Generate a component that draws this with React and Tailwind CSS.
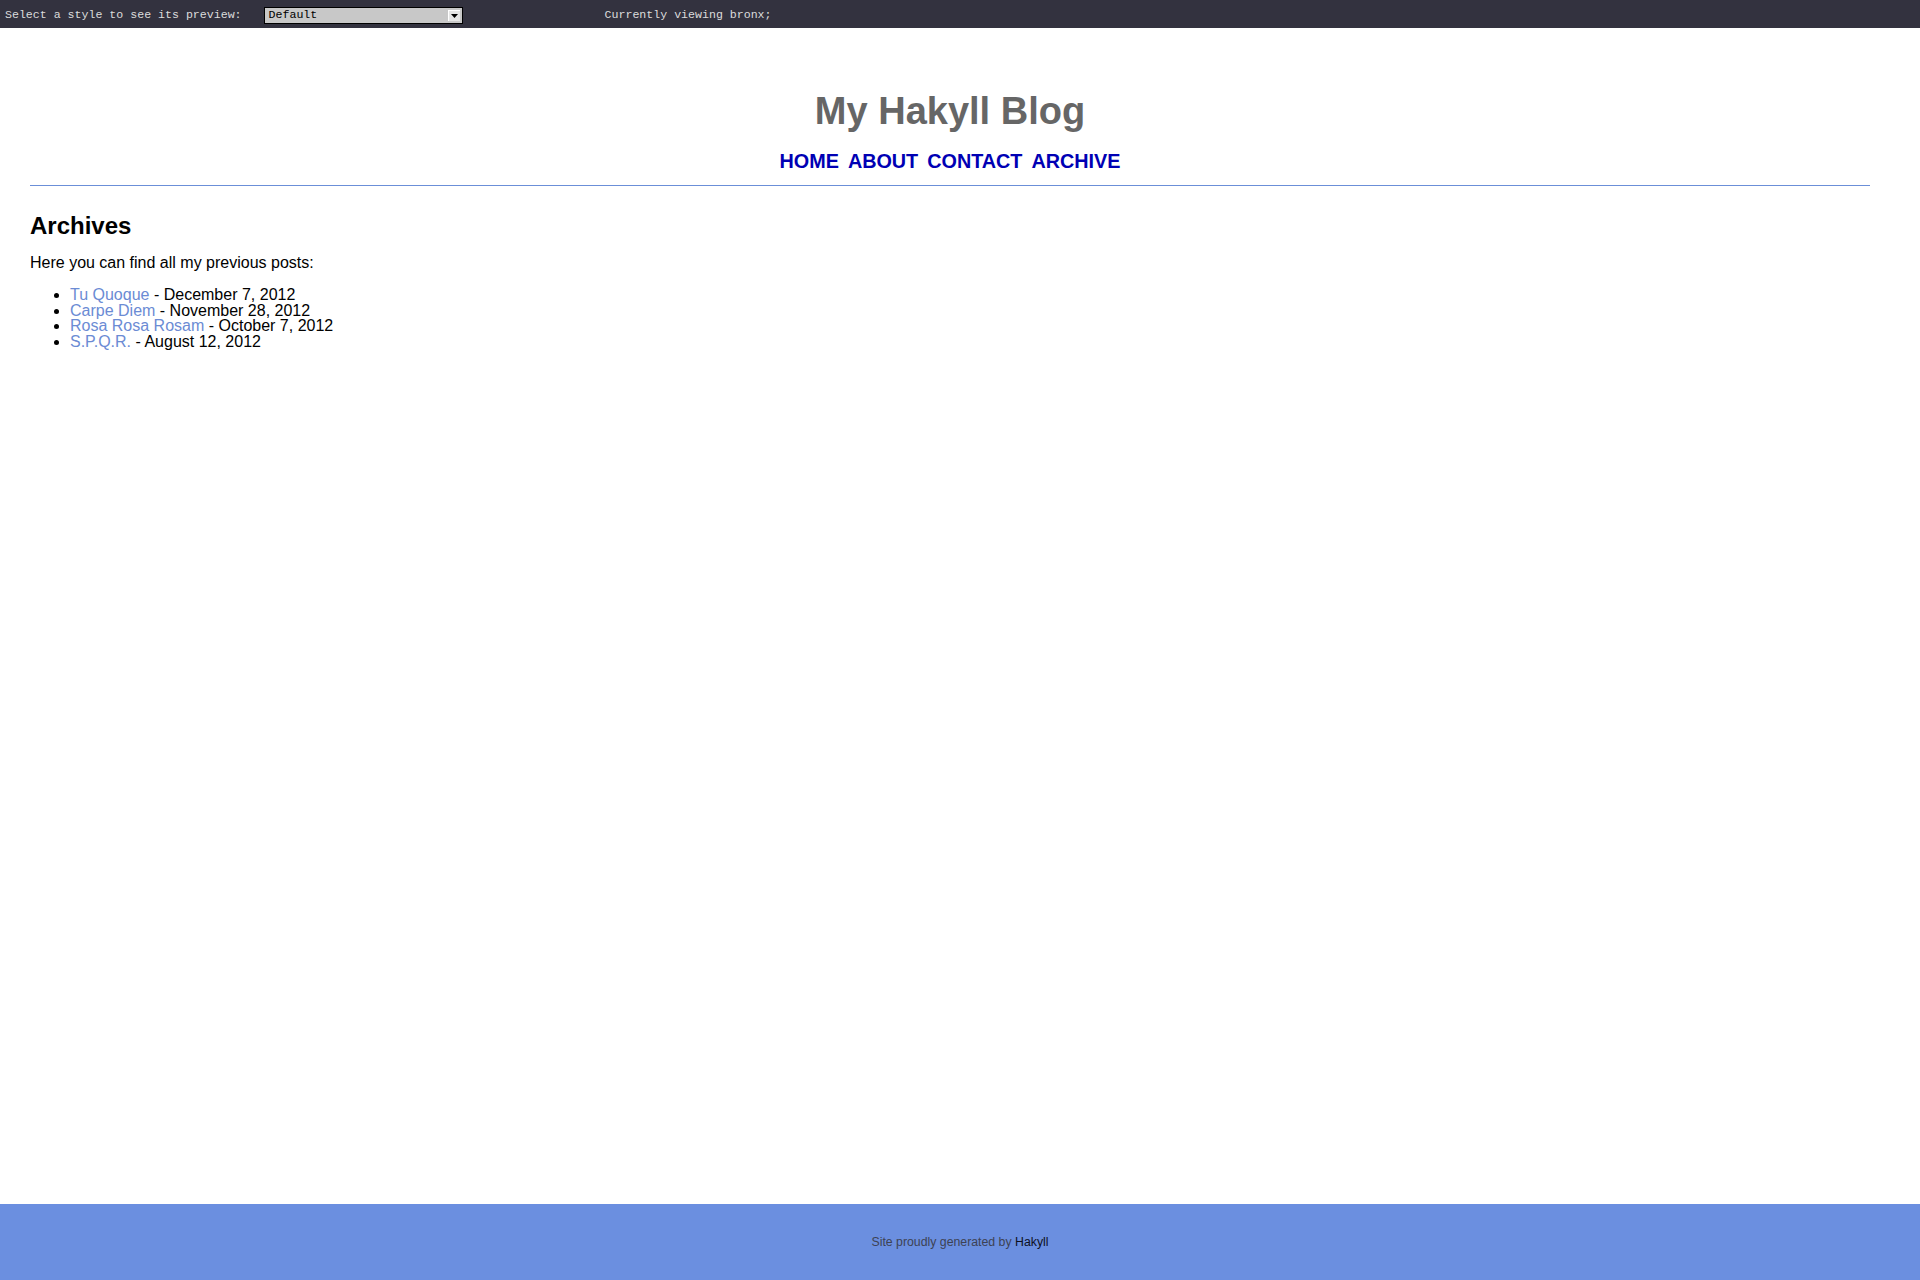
export default function App() {
  const posts = [
    { title: "Tu Quoque", date: "December 7, 2012" },
    { title: "Carpe Diem", date: "November 28, 2012" },
    { title: "Rosa Rosa Rosam", date: "October 7, 2012" },
    { title: "S.P.Q.R.", date: "August 12, 2012" },
  ];

  return (
    <div className="h-screen overflow-hidden flex flex-col bg-white font-['Liberation_Sans',Arial,sans-serif] text-black">
      {/* style switcher bar */}
      <div className="h-[28px] pt-[2px] bg-[#33323f] flex items-center text-[11.6px] text-[#dcdcdc] font-['Liberation_Mono','Courier_New',monospace] shrink-0">
        <span className="ml-[5px]">Select a style to see its preview:</span>
        <div className="ml-[22px] w-[199px] h-[17px] bg-[#c8c8c8] border border-black flex items-center justify-between pl-[4px] pr-[2px] text-black">
          <span>Default</span>
          <span className="w-[12px] h-[11px] bg-[#e6e6e6] border-l border-t border-white flex items-center justify-center">
            <svg width="7" height="4" viewBox="0 0 7 4">
              <path d="M0 0H7L3.5 4Z" fill="#000" />
            </svg>
          </span>
        </div>
        <span className="ml-[142px]">Currently viewing bronx;</span>
      </div>

      <main className="flex-1 ml-[30px] mr-[50px]">
        <header className="pt-[61px] text-center">
          <h1 className="text-[38px] leading-[44px] font-bold text-[#666666]">My Hakyll Blog</h1>
          <nav className="mt-[17px] flex justify-center gap-[9px] text-[19.8px] leading-[22px] font-bold text-[#0000b4]">
            <a href="#">HOME</a>
            <a href="#">ABOUT</a>
            <a href="#">CONTACT</a>
            <a href="#">ARCHIVE</a>
          </nav>
        </header>
        <div className="mt-[13px] border-t border-[#6b8fd8]" />

        <section>
          <h2 className="mt-[26px] text-[24px] leading-[28px] font-bold">Archives</h2>
          <p className="mt-[14px] text-[16px] leading-[18px]">Here you can find all my previous posts:</p>
          <ul className="mt-[15px] pl-[40px] list-disc text-[16px] leading-[15.67px]">
            {posts.map((p) => (
              <li key={p.title}>
                <a href="#" className="text-[#6b8bd4]">{p.title}</a> - {p.date}
              </li>
            ))}
          </ul>
        </section>
      </main>

      <footer className="h-[76px] bg-[#6b8fe0] flex items-center justify-center text-[12.3px] text-[#3d4254] shrink-0">
        <span>
          Site proudly generated by <a href="#" className="text-[#0d0f1e]">Hakyll</a>
        </span>
      </footer>
    </div>
  );
}
